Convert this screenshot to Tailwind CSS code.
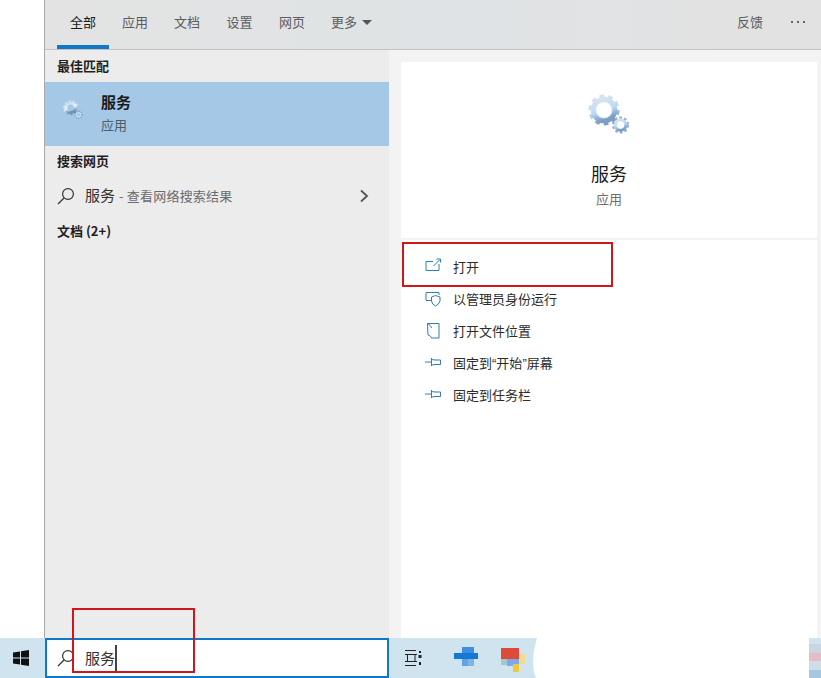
<!DOCTYPE html>
<html lang="zh-CN">

<head>
    <meta charset="UTF-8">
    <meta name="viewport" content="width=device-width, initial-scale=1.0">
    <title>搜索 - 服务</title>
    <script src="https://cdn.jsdelivr.net/npm/@tailwindcss/browser@4"></script>
</head>

<body class="relative w-[821px] h-[678px] overflow-hidden bg-white text-[13px] text-[#2b2b2b] font-['Noto_Sans_CJK_SC','Liberation_Sans',sans-serif]">

    <svg class="absolute w-0 h-0">
        <defs>
            <linearGradient id="gearBody" x1="0" y1="0" x2="0.35" y2="1">
                <stop offset="0" stop-color="#dbe3ec" />
                <stop offset="0.6" stop-color="#bfdaf4" />
                <stop offset="1" stop-color="#7d9dc4" />
            </linearGradient>
            <linearGradient id="gearLight" x1="0" y1="0" x2="0.35" y2="1">
                <stop offset="0" stop-color="#bcd8ec" />
                <stop offset="0.6" stop-color="#e8f6fc" />
                <stop offset="1" stop-color="#6f94b8" />
            </linearGradient>
            <g id="gears">
                <circle cx="16" cy="16" r="13.8" fill="none" stroke="url(#gearBody)" stroke-width="3.6" stroke-dasharray="4.6 4" />
                <circle cx="16" cy="16" r="10.6" fill="none" stroke="url(#gearBody)" stroke-width="5.4" />
                <circle cx="16" cy="16" r="7.9" fill="none" stroke="#dff2fb" stroke-width="1.1" />
                <circle cx="32.5" cy="31" r="7.2" fill="none" stroke="#8fadcf" stroke-width="2.6" stroke-dasharray="2.6 2.05" />
                <circle cx="32.5" cy="31" r="5.2" fill="none" stroke="url(#gearBody)" stroke-width="3" />
            </g>
            <g id="gearsLight">
                <circle cx="16" cy="16" r="13.8" fill="none" stroke="url(#gearLight)" stroke-width="3.6" stroke-dasharray="4.6 4" />
                <circle cx="16" cy="16" r="10" fill="none" stroke="url(#gearLight)" stroke-width="6.5" />
                <circle cx="32.5" cy="31" r="7.2" fill="none" stroke="#6f8eb0" stroke-width="2.6" stroke-dasharray="2.6 2.05" />
                <circle cx="32.5" cy="31" r="5" fill="none" stroke="#bcd8ec" stroke-width="3" />
            </g>
        </defs>
    </svg>

    <div class="flex h-[638px]">
        <div class="w-[44px] shrink-0 bg-white"></div>

        <div class="flex-1 flex flex-col border-l border-[#a9a9a9]">
            <!-- tabs -->
            <div class="h-[50px] shrink-0 flex items-start justify-between border-b border-[#c2c2c2] bg-linear-to-r from-[#e3e3e3] via-[#dfe3e5] to-[#e3e2e2]">
                <div class="flex pl-[12px] text-[#5c5c5c]">
                    <div class="w-[52px] h-[49px] pt-[12px] text-center text-[#1a1a1a] border-b-[4px] border-[#0f78c8] leading-[20px]">全部</div>
                    <div class="w-[52px] pt-[12px] text-center leading-[20px]">应用</div>
                    <div class="w-[52px] pt-[12px] text-center leading-[20px]">文档</div>
                    <div class="w-[53px] pt-[12px] text-center leading-[20px]">设置</div>
                    <div class="w-[52px] pt-[12px] text-center leading-[20px]">网页</div>
                    <div class="flex items-start pl-[13px] pt-[12px] leading-[20px]">更多
                        <span class="mt-[8px] ml-[5px] w-0 h-0 border-x-[5px] border-x-transparent border-t-[5px] border-t-[#555]"></span>
                    </div>
                </div>
                <div class="flex pt-[12px] pr-[16px] text-[#5c5c5c] leading-[20px]">
                    <span class="-ml-[1px] mr-[1px]">反馈</span>
                    <span class="flex items-center gap-[4px] ml-[27px]">
                        <i class="w-[2px] h-[2px] bg-[#666]"></i>
                        <i class="w-[2px] h-[2px] bg-[#666]"></i>
                        <i class="w-[2px] h-[2px] bg-[#666]"></i>
                    </span>
                </div>
            </div>

            <div class="flex-1 flex min-h-0">
                <!-- results -->
                <div class="w-[344px] shrink-0 bg-[#ececec]">
                    <div class="h-[32px] pl-[12px] pt-[6px] font-bold text-[#1f1f1f] leading-[20px]">最佳匹配</div>
                    <div class="h-[64px] flex bg-[#a4c8e6]">
                        <svg class="w-[20px] h-[20px] shrink-0 ml-[18px] mt-[18px]" viewBox="0 0 42 42"><use href="#gearsLight" /></svg>
                        <div class="ml-[18px] pt-[10px]">
                            <div class="text-[15px] font-bold leading-[20px] text-[#1a1a1a]">服务</div>
                            <div class="mt-[3px] leading-[20px] text-[#4f5d69]">应用</div>
                        </div>
                    </div>
                    <div class="h-[32px] pl-[12px] pt-[5px] font-bold text-[#1f1f1f] leading-[20px]">搜索网页</div>
                    <div class="h-[35px] flex items-center pl-[12px] pr-[20px]">
                        <svg class="w-[18px] h-[18px] shrink-0" viewBox="0 0 18 18" fill="none" stroke="#333" stroke-width="1.2">
                            <circle cx="11" cy="7" r="5.4" />
                            <path d="M7 11 L1 17" />
                        </svg>
                        <span class="ml-[10px] text-[15px] text-[#333]">服务</span>
                        <span class="ml-[4px] text-[#6b6b6b] tracking-[0.2px]">- 查看网络搜索结果</span>
                        <svg class="ml-auto w-[10px] h-[14px]" viewBox="0 0 10 14" fill="none" stroke="#555" stroke-width="1.8">
                            <path d="M2 1.5 L8 7 L2 12.5" />
                        </svg>
                    </div>
                    <div class="pl-[12px] pt-[8px] font-bold text-[#1f1f1f] leading-[20px]">文档 (2+)</div>
                </div>

                <!-- preview -->
                <div class="flex-1 flex flex-col bg-[#f3f3f3] pl-[12px] pr-[4px] pt-[12px]">
                    <div class="h-[176px] shrink-0 flex flex-col items-center bg-white">
                        <svg class="w-[42px] h-[42px] mt-[32px]" viewBox="0 0 42 42"><use href="#gears" /></svg>
                        <div class="mt-[24px] text-[18px] leading-[26px] text-[#1a1a1a]">服务</div>
                        <div class="mt-[3px] leading-[20px] text-[#6f6f6f]">应用</div>
                    </div>
                    <div class="flex-1 mt-[2px] bg-white pt-[11px]">
                        <div class="h-[32px] flex items-center pl-[24px] gap-[12px]">
                            <svg class="w-[16px] h-[16px] shrink-0 -mt-[2px]" viewBox="0 0 16 16" fill="none" stroke="#2f7fb5">
                                <path d="M8 3.5 H1 V12.5 H14 V6" />
                                <path d="M8.5 8 L15 1.5 M11.5 1 H15.5 V4.5" />
                            </svg>
                            <span>打开</span>
                        </div>
                        <div class="h-[32px] flex items-center pl-[24px] gap-[12px]">
                            <svg class="w-[16px] h-[16px] shrink-0 -mt-[1px]" viewBox="0 0 16 16" fill="none" stroke="#2f7fb5">
                                <path d="M6 9.5 H1 V1.5 H14 V4" />
                                <path d="M6.5 6 L10.5 4.5 L15 6 V10 Q14 13.5 10.5 15 Q7 13.5 6.5 10 Z" />
                            </svg>
                            <span>以管理员身份运行</span>
                        </div>
                        <div class="h-[32px] flex items-center pl-[24px] gap-[12px]">
                            <svg class="w-[16px] h-[16px] shrink-0 -mt-[1px]" viewBox="0 0 16 16" fill="none" stroke="#2f7fb5">
                                <path d="M2.5 .5 H14 V15 H6.5 C6 13.5 5 12.5 3 12 Z" />
                                <path d="M2.5 .5 C4.5 1.5 6 3 6.5 5" />
                            </svg>
                            <span>打开文件位置</span>
                        </div>
                        <div class="h-[32px] flex items-center pl-[24px] gap-[12px]">
                            <svg class="w-[16px] h-[16px] shrink-0 -mt-[3px]" viewBox="0 0 16 16" fill="none" stroke="#2f7fb5">
                                <path d="M0 8 H6.5 M6.5 4 V12 M6.5 5.5 L10 6 H15.5 V10.5 H10 L6.5 11" />
                            </svg>
                            <span>固定到<span class="font-['Liberation_Sans']">“</span>开始<span class="font-['Liberation_Sans']">”</span>屏幕</span>
                        </div>
                        <div class="h-[32px] flex items-center pl-[24px] gap-[12px]">
                            <svg class="w-[16px] h-[16px] shrink-0 -mt-[3px]" viewBox="0 0 16 16" fill="none" stroke="#2f7fb5">
                                <path d="M0 8 H6.5 M6.5 4 V12 M6.5 5.5 L10 6 H15.5 V10.5 H10 L6.5 11" />
                            </svg>
                            <span>固定到任务栏</span>
                        </div>
                    </div>
                </div>
            </div>
        </div>
    </div>

    <!-- taskbar -->
    <div class="flex h-[40px]">
        <div class="w-[537px] shrink-0 flex bg-[#cfe4ef] [clip-path:polygon(0_0,537px_0,534px_12px,533px_24px,534px_34px,536px_40px,0_40px)]">
            <div class="w-[45px] shrink-0 flex items-center pl-[13px]">
                <svg class="w-[16px] h-[16px]" viewBox="0 0 16 16" fill="#111">
                    <path d="M0 2.4 L7 1.4 V7.5 H0 Z M8 1.2 L16 0 V7.5 H8 Z M0 8.5 H7 V14.6 L0 13.6 Z M8 8.5 H16 V16 L8 14.8 Z" />
                </svg>
            </div>
            <div class="w-[344px] shrink-0 flex items-center border-2 border-[#0f78c8] bg-white pl-[10px]">
                <svg class="w-[18px] h-[18px] shrink-0" viewBox="0 0 18 18" fill="none" stroke="#333" stroke-width="1.2">
                    <circle cx="11" cy="7" r="5.4" />
                    <path d="M7 11 L1 17" />
                </svg>
                <span class="ml-[10px] text-[15px] text-[#333]">服务</span>
                <span class="w-[2px] h-[26px] bg-[#444]"></span>
            </div>
            <div class="flex items-start pl-[16px] pt-[10px]">
                <svg class="w-[17px] h-[16px] mt-[2px]" viewBox="0 0 17 16" fill="none" stroke="#222">
                    <path d="M0 .5 H11 M0 15.5 H11 M2.5 4.5 H10 V11.5 H2.5 Z M0 4.5 H12 M0 11.5 H12" />
                    <path d="M15 1 V3 M15 12 V15" stroke-width="2" />
                    <rect x="13.5" y="5" width="3" height="3" fill="#222" stroke="none" />
                </svg>
                <!-- blurred app icons -->
                <svg class="ml-[32px] -mt-[1px] w-[24px] h-[19px]" viewBox="0 0 24 19">
                    <rect x="8" y="0" width="12" height="19" fill="#3f8fdc" />
                    <rect x="0" y="6" width="24" height="6" fill="#1478d8" />
                    <rect x="14" y="12" width="6" height="7" fill="#7db4e4" />
                    <rect x="8" y="12" width="6" height="7" fill="#5ea3e2" />
                </svg>
                <svg class="ml-[23px] w-[26px] h-[24px]" viewBox="0 0 26 24">
                    <rect x="0" y="0" width="18" height="11" fill="#dd4a3a" />
                    <rect x="0" y="11" width="6" height="6" fill="#a5c8c8" />
                    <rect x="6" y="11" width="12" height="7" fill="#7fa8e6" />
                    <rect x="18" y="6" width="6" height="10" fill="#f1dc8e" />
                    <rect x="12" y="16" width="6" height="8" fill="#f1c93c" />
                </svg>
            </div>
        </div>
        <div class="ml-auto w-[12px] flex flex-col">
            <div class="h-[6px] bg-[#cfe4ef]"></div>
            <div class="h-[9px] bg-[#c9d5e0]"></div>
            <div class="h-[8px] bg-[#e4bcc6]"></div>
            <div class="h-[9px] bg-[#cfdde8]"></div>
            <div class="h-[8px] bg-[#a5c8de]"></div>
        </div>
    </div>

    <!-- red annotation boxes drawn over the screenshot -->
    <div class="absolute left-[402px] top-[242px] w-[211px] h-[45px] border-2 border-[#d0161b]"></div>
    <div class="absolute left-[72px] top-[608px] w-[123px] h-[65px] border-2 border-[#d0161b]"></div>

</body>

</html>
